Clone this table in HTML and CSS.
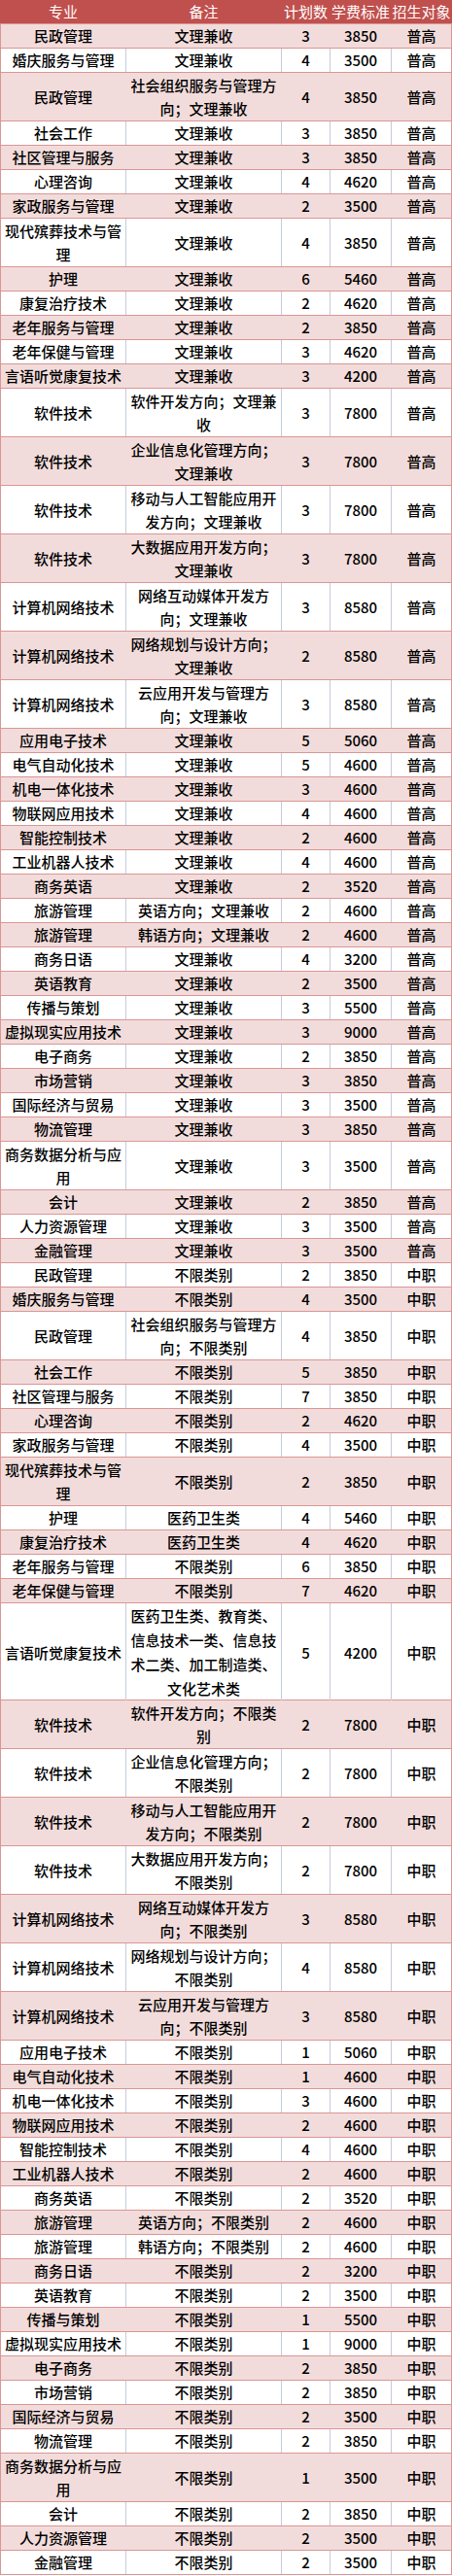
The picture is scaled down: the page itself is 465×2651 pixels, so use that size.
FILE: index.html
```html
<!DOCTYPE html>
<html lang="zh-CN">
<head>
<meta charset="utf-8">
<title>招生计划</title>
<link rel="stylesheet" href="styles.css">
</head>
<body>
<div class="sheet">
  <div class="row head"><div>专业</div><div>备注</div><div>计划数</div><div>学费标准</div><div>招生对象</div></div>
  <div class="rows">
    <div class="row"><div>民政管理</div><div>文理兼收</div><div>3</div><div>3850</div><div>普高</div></div>
    <div class="row"><div>婚庆服务与管理</div><div>文理兼收</div><div>4</div><div>3500</div><div>普高</div></div>
    <div class="row l2"><div>民政管理</div><div>社会组织服务与管理方向；文理兼收</div><div>4</div><div>3850</div><div>普高</div></div>
    <div class="row"><div>社会工作</div><div>文理兼收</div><div>3</div><div>3850</div><div>普高</div></div>
    <div class="row"><div>社区管理与服务</div><div>文理兼收</div><div>3</div><div>3850</div><div>普高</div></div>
    <div class="row"><div>心理咨询</div><div>文理兼收</div><div>4</div><div>4620</div><div>普高</div></div>
    <div class="row"><div>家政服务与管理</div><div>文理兼收</div><div>2</div><div>3500</div><div>普高</div></div>
    <div class="row l2"><div>现代殡葬技术与管理</div><div>文理兼收</div><div>4</div><div>3850</div><div>普高</div></div>
    <div class="row"><div>护理</div><div>文理兼收</div><div>6</div><div>5460</div><div>普高</div></div>
    <div class="row"><div>康复治疗技术</div><div>文理兼收</div><div>2</div><div>4620</div><div>普高</div></div>
    <div class="row"><div>老年服务与管理</div><div>文理兼收</div><div>2</div><div>3850</div><div>普高</div></div>
    <div class="row"><div>老年保健与管理</div><div>文理兼收</div><div>3</div><div>4620</div><div>普高</div></div>
    <div class="row"><div>言语听觉康复技术</div><div>文理兼收</div><div>3</div><div>4200</div><div>普高</div></div>
    <div class="row l2"><div>软件技术</div><div>软件开发方向；文理兼收</div><div>3</div><div>7800</div><div>普高</div></div>
    <div class="row l2"><div>软件技术</div><div>企业信息化管理方向；文理兼收</div><div>3</div><div>7800</div><div>普高</div></div>
    <div class="row l2"><div>软件技术</div><div>移动与人工智能应用开发方向；文理兼收</div><div>3</div><div>7800</div><div>普高</div></div>
    <div class="row l2"><div>软件技术</div><div>大数据应用开发方向；文理兼收</div><div>3</div><div>7800</div><div>普高</div></div>
    <div class="row l2"><div>计算机网络技术</div><div>网络互动媒体开发方向；文理兼收</div><div>3</div><div>8580</div><div>普高</div></div>
    <div class="row l2"><div>计算机网络技术</div><div>网络规划与设计方向；文理兼收</div><div>2</div><div>8580</div><div>普高</div></div>
    <div class="row l2"><div>计算机网络技术</div><div>云应用开发与管理方向；文理兼收</div><div>3</div><div>8580</div><div>普高</div></div>
    <div class="row"><div>应用电子技术</div><div>文理兼收</div><div>5</div><div>5060</div><div>普高</div></div>
    <div class="row"><div>电气自动化技术</div><div>文理兼收</div><div>5</div><div>4600</div><div>普高</div></div>
    <div class="row"><div>机电一体化技术</div><div>文理兼收</div><div>3</div><div>4600</div><div>普高</div></div>
    <div class="row"><div>物联网应用技术</div><div>文理兼收</div><div>4</div><div>4600</div><div>普高</div></div>
    <div class="row"><div>智能控制技术</div><div>文理兼收</div><div>2</div><div>4600</div><div>普高</div></div>
    <div class="row"><div>工业机器人技术</div><div>文理兼收</div><div>4</div><div>4600</div><div>普高</div></div>
    <div class="row"><div>商务英语</div><div>文理兼收</div><div>2</div><div>3520</div><div>普高</div></div>
    <div class="row"><div>旅游管理</div><div>英语方向；文理兼收</div><div>2</div><div>4600</div><div>普高</div></div>
    <div class="row"><div>旅游管理</div><div>韩语方向；文理兼收</div><div>2</div><div>4600</div><div>普高</div></div>
    <div class="row"><div>商务日语</div><div>文理兼收</div><div>4</div><div>3200</div><div>普高</div></div>
    <div class="row"><div>英语教育</div><div>文理兼收</div><div>2</div><div>3500</div><div>普高</div></div>
    <div class="row"><div>传播与策划</div><div>文理兼收</div><div>3</div><div>5500</div><div>普高</div></div>
    <div class="row"><div>虚拟现实应用技术</div><div>文理兼收</div><div>3</div><div>9000</div><div>普高</div></div>
    <div class="row"><div>电子商务</div><div>文理兼收</div><div>2</div><div>3850</div><div>普高</div></div>
    <div class="row"><div>市场营销</div><div>文理兼收</div><div>3</div><div>3850</div><div>普高</div></div>
    <div class="row"><div>国际经济与贸易</div><div>文理兼收</div><div>3</div><div>3500</div><div>普高</div></div>
    <div class="row"><div>物流管理</div><div>文理兼收</div><div>3</div><div>3850</div><div>普高</div></div>
    <div class="row l2"><div>商务数据分析与应用</div><div>文理兼收</div><div>3</div><div>3500</div><div>普高</div></div>
    <div class="row"><div>会计</div><div>文理兼收</div><div>2</div><div>3850</div><div>普高</div></div>
    <div class="row"><div>人力资源管理</div><div>文理兼收</div><div>3</div><div>3500</div><div>普高</div></div>
    <div class="row"><div>金融管理</div><div>文理兼收</div><div>3</div><div>3500</div><div>普高</div></div>
    <div class="row"><div>民政管理</div><div>不限类别</div><div>2</div><div>3850</div><div>中职</div></div>
    <div class="row"><div>婚庆服务与管理</div><div>不限类别</div><div>4</div><div>3500</div><div>中职</div></div>
    <div class="row l2"><div>民政管理</div><div>社会组织服务与管理方向；不限类别</div><div>4</div><div>3850</div><div>中职</div></div>
    <div class="row"><div>社会工作</div><div>不限类别</div><div>5</div><div>3850</div><div>中职</div></div>
    <div class="row"><div>社区管理与服务</div><div>不限类别</div><div>7</div><div>3850</div><div>中职</div></div>
    <div class="row"><div>心理咨询</div><div>不限类别</div><div>2</div><div>4620</div><div>中职</div></div>
    <div class="row"><div>家政服务与管理</div><div>不限类别</div><div>4</div><div>3500</div><div>中职</div></div>
    <div class="row l2"><div>现代殡葬技术与管理</div><div>不限类别</div><div>2</div><div>3850</div><div>中职</div></div>
    <div class="row"><div>护理</div><div>医药卫生类</div><div>4</div><div>5460</div><div>中职</div></div>
    <div class="row"><div>康复治疗技术</div><div>医药卫生类</div><div>4</div><div>4620</div><div>中职</div></div>
    <div class="row"><div>老年服务与管理</div><div>不限类别</div><div>6</div><div>3850</div><div>中职</div></div>
    <div class="row"><div>老年保健与管理</div><div>不限类别</div><div>7</div><div>4620</div><div>中职</div></div>
    <div class="row l4"><div>言语听觉康复技术</div><div>医药卫生类、教育类、信息技术一类、信息技术二类、加工制造类、文化艺术类</div><div>5</div><div>4200</div><div>中职</div></div>
    <div class="row l2"><div>软件技术</div><div>软件开发方向；不限类别</div><div>2</div><div>7800</div><div>中职</div></div>
    <div class="row l2"><div>软件技术</div><div>企业信息化管理方向；不限类别</div><div>2</div><div>7800</div><div>中职</div></div>
    <div class="row l2"><div>软件技术</div><div>移动与人工智能应用开发方向；不限类别</div><div>2</div><div>7800</div><div>中职</div></div>
    <div class="row l2"><div>软件技术</div><div>大数据应用开发方向；不限类别</div><div>2</div><div>7800</div><div>中职</div></div>
    <div class="row l2"><div>计算机网络技术</div><div>网络互动媒体开发方向；不限类别</div><div>3</div><div>8580</div><div>中职</div></div>
    <div class="row l2"><div>计算机网络技术</div><div>网络规划与设计方向；不限类别</div><div>4</div><div>8580</div><div>中职</div></div>
    <div class="row l2"><div>计算机网络技术</div><div>云应用开发与管理方向；不限类别</div><div>3</div><div>8580</div><div>中职</div></div>
    <div class="row"><div>应用电子技术</div><div>不限类别</div><div>1</div><div>5060</div><div>中职</div></div>
    <div class="row"><div>电气自动化技术</div><div>不限类别</div><div>1</div><div>4600</div><div>中职</div></div>
    <div class="row"><div>机电一体化技术</div><div>不限类别</div><div>3</div><div>4600</div><div>中职</div></div>
    <div class="row"><div>物联网应用技术</div><div>不限类别</div><div>2</div><div>4600</div><div>中职</div></div>
    <div class="row"><div>智能控制技术</div><div>不限类别</div><div>4</div><div>4600</div><div>中职</div></div>
    <div class="row"><div>工业机器人技术</div><div>不限类别</div><div>2</div><div>4600</div><div>中职</div></div>
    <div class="row"><div>商务英语</div><div>不限类别</div><div>2</div><div>3520</div><div>中职</div></div>
    <div class="row"><div>旅游管理</div><div>英语方向；不限类别</div><div>2</div><div>4600</div><div>中职</div></div>
    <div class="row"><div>旅游管理</div><div>韩语方向；不限类别</div><div>2</div><div>4600</div><div>中职</div></div>
    <div class="row"><div>商务日语</div><div>不限类别</div><div>2</div><div>3200</div><div>中职</div></div>
    <div class="row"><div>英语教育</div><div>不限类别</div><div>2</div><div>3500</div><div>中职</div></div>
    <div class="row"><div>传播与策划</div><div>不限类别</div><div>1</div><div>5500</div><div>中职</div></div>
    <div class="row"><div>虚拟现实应用技术</div><div>不限类别</div><div>1</div><div>9000</div><div>中职</div></div>
    <div class="row"><div>电子商务</div><div>不限类别</div><div>2</div><div>3850</div><div>中职</div></div>
    <div class="row"><div>市场营销</div><div>不限类别</div><div>2</div><div>3850</div><div>中职</div></div>
    <div class="row"><div>国际经济与贸易</div><div>不限类别</div><div>2</div><div>3500</div><div>中职</div></div>
    <div class="row"><div>物流管理</div><div>不限类别</div><div>2</div><div>3850</div><div>中职</div></div>
    <div class="row l2"><div>商务数据分析与应用</div><div>不限类别</div><div>1</div><div>3500</div><div>中职</div></div>
    <div class="row"><div>会计</div><div>不限类别</div><div>2</div><div>3850</div><div>中职</div></div>
    <div class="row"><div>人力资源管理</div><div>不限类别</div><div>2</div><div>3500</div><div>中职</div></div>
    <div class="row"><div>金融管理</div><div>不限类别</div><div>2</div><div>3500</div><div>中职</div></div>
  </div>
</div>
</body>
</html>
```

FILE: styles.css
```css
html, body {
  margin: 0;
  padding: 0;
  background: #ffffff;
}

.sheet {
  width: 465px;
  font-family: "Noto Sans CJK SC", "Noto Sans", sans-serif;
  font-size: 15px;
  font-weight: 500;
  line-height: 24px;
  color: #000000;
  text-spacing-trim: space-all;
}

.row {
  display: grid;
  grid-template-columns: 130px 160px 50px 63px 62px;
  height: 25px;
  box-sizing: border-box;
  border-bottom: 1px solid #d99694;
  background: #ffffff;
}

.row.l2 { height: 50px; }
.row.l4 { height: 100px; line-height: 25px; }

.row > div {
  display: flex;
  align-items: center;
  justify-content: center;
  text-align: center;
  box-sizing: border-box;
  border-right: 1px solid #c5cbdc;
  padding: 0 1px;
  min-width: 0;
}

.row > div:first-child {
  border-left: 1px solid #d99694;
}

.row > div:last-child {
  border-right-color: #d99694;
}

.rows .row:nth-child(odd) {
  background: #f2dcdb;
}

.rows .row:nth-child(odd) > div {
  border-right-color: #f2dcdb;
}

.rows .row:nth-child(odd) > div:last-child {
  border-right-color: #d99694;
}

.row.head {
  background: #c0504d;
  color: #ffffff;
  font-weight: 400;
  border-bottom-color: #d99694;
}

.row.head > div,
.row.head > div:first-child,
.row.head > div:last-child {
  border-color: #c0504d;
  padding: 0;
}
```
